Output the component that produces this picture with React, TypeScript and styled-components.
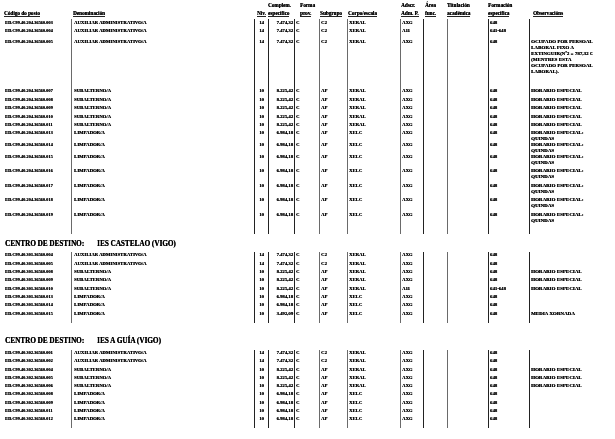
import React from 'react';
import styled, { createGlobalStyle } from 'styled-components';

const GlobalStyle = createGlobalStyle`
  html, body {
    margin: 0;
    padding: 0;
    background: #fff;
  }
  body {
    font-family: 'Liberation Serif', 'Times New Roman', serif;
    font-weight: 700;
    color: #000;
  }
`;

const COLS = '67px 183px 14px 26px 25px 28px 53px 23px 24px 41px 41px 81px';
const INK = '#222';
const SOFT = '#6a6a6a';
// columns whose left rule is drawn light grey in the scan
const LIGHT = [1, 5, 6, 7, 9];

type Row = {
  code: string;
  name: string;
  niv: string;
  comp: string;
  sub: string;
  corpo: string;
  adscr: string;
  form: string;
  obs?: string[];
  h: number;
};

const ADM = 'AUXILIAR ADMINISTRATIVO/A';
const SUB = 'SUBALTERNO/A';
const LIM = 'LIMPADOR/A';
const HE = ['HORARIO ESPECIAL'];
const HQ = ['HORARIO ESPECIAL:', 'QUINDAS'];

const adm = (code: string, adscr: string, form: string, h: number, obs?: string[]): Row => ({
  code, name: ADM, niv: '14', comp: '7.474,32', sub: 'C2', corpo: 'XERAL', adscr, form, obs, h,
});
const sub = (code: string, adscr: string, form: string, h: number, obs?: string[]): Row => ({
  code, name: SUB, niv: '10', comp: '8.225,42', sub: 'AP', corpo: 'XERAL', adscr, form, obs, h,
});
const lim = (code: string, h: number, obs?: string[], comp = '6.984,18'): Row => ({
  code, name: LIM, niv: '10', comp, sub: 'AP', corpo: 'XELC', adscr: 'AXG', form: '648', obs, h,
});

const section1: Row[] = [
  adm('ED.C99.40.204.36560.003', 'AXG', '648', 8),
  adm('ED.C99.40.204.36560.004', 'A11', '641-648', 11),
  adm('ED.C99.40.204.36560.005', 'AXG', '648', 49, [
    'OCUPADO POR PERSOAL',
    'LABORAL FIXO A',
    'EXTINGUIR(Nº2 = 787,32 €',
    '(MENTRES ESTA',
    'OCUPADO POR PERSOAL',
    'LABORAL).',
  ]),
  sub('ED.C99.40.204.36560.007', 'AXG', '648', 9, HE),
  sub('ED.C99.40.204.36560.008', 'AXG', '648', 8, HE),
  sub('ED.C99.40.204.36560.009', 'AXG', '648', 9, HE),
  sub('ED.C99.40.204.36560.010', 'AXG', '648', 8, HE),
  sub('ED.C99.40.204.36560.011', 'AXG', '648', 8, HE),
  lim('ED.C99.40.204.36560.013', 12, HQ),
  lim('ED.C99.40.204.36560.014', 12, HQ),
  lim('ED.C99.40.204.36560.015', 14, HQ),
  lim('ED.C99.40.204.36560.016', 15, HQ),
  lim('ED.C99.40.204.36560.017', 14, HQ),
  lim('ED.C99.40.204.36560.018', 15, HQ),
  lim('ED.C99.40.204.36560.019', 14, HQ),
];

const section2: Row[] = [
  adm('ED.C99.40.301.36560.004', 'AXG', '648', 8.5),
  adm('ED.C99.40.301.36560.005', 'AXG', '648', 8.4),
  sub('ED.C99.40.301.36560.008', 'AXG', '648', 8.4, HE),
  sub('ED.C99.40.301.36560.009', 'AXG', '648', 8.4, HE),
  sub('ED.C99.40.301.36560.010', 'A11', '641-648', 8.4, HE),
  lim('ED.C99.40.301.36560.013', 8.4),
  lim('ED.C99.40.301.36560.014', 8.4),
  lim('ED.C99.40.301.36560.015', 8.4, ['MEDIA XORNADA'], '3.492,09'),
];

const section3: Row[] = [
  adm('ED.C99.40.302.36560.001', 'AXG', '648', 8.25),
  adm('ED.C99.40.302.36560.002', 'AXG', '648', 8.25),
  sub('ED.C99.40.302.36560.004', 'AXG', '648', 8.25, HE),
  sub('ED.C99.40.302.36560.005', 'AXG', '648', 8.25, HE),
  sub('ED.C99.40.302.36560.006', 'AXG', '648', 8.25, HE),
  lim('ED.C99.40.302.36560.008', 8.25),
  lim('ED.C99.40.302.36560.009', 8.25),
  lim('ED.C99.40.302.36560.011', 8.25),
  lim('ED.C99.40.302.36560.012', 8.25),
];

const Page = styled.div`
  width: 615px;
  padding: 0 0 0 4px;
  box-sizing: border-box;
  will-change: transform;
  text-shadow: 0.25px 0 0 #000;
`;

const Head = styled.div`
  display: grid;
  grid-template-columns: ${COLS};
  height: 19px;
  align-items: end;
  font-size: 5.2px;
  line-height: 7.5px;
`;

const HeadCell = styled.div<{ $pad?: number }>`
  padding-left: ${(p) => p.$pad ?? 2}px;
  padding-bottom: 2px;
  white-space: nowrap;
  span {
    display: inline-block;
    line-height: 5.5px;
    box-shadow: inset 0 -1px 0 ${INK};
    padding-bottom: 1px;
  }
`;

const Table = styled.div`
  display: grid;
  grid-template-columns: ${COLS};
`;

const Lines = styled.div`
  display: contents;
`;

type Kind = 'code' | 'text' | 'obs';

const SIZES: Record<Kind, string> = { code: '4.4px', text: '4.75px', obs: '5px' };

const rule = (col?: number) =>
  col === undefined || col === 0 ? 'none' : `inset 1px 0 0 ${LIGHT.includes(col) ? SOFT : INK}`;

const Cell = styled.div<{ $col: number; $align?: string; $pad?: number; $kind?: Kind }>`
  font-size: ${(p) => SIZES[p.$kind ?? 'text']};
  line-height: ${(p) => (p.$kind === 'obs' ? '6px' : '6.8px')};
  white-space: nowrap;
  text-align: ${(p) => p.$align ?? 'left'};
  padding: 0 ${(p) => (p.$align === 'right' ? 1 : 0)}px 0 ${(p) => p.$pad ?? 1}px;
  box-shadow: ${(p) => rule(p.$col)};
  box-sizing: border-box;
`;

const Tail = styled.div<{ $col: number; $h: number }>`
  height: ${(p) => p.$h}px;
  box-shadow: ${(p) => rule(p.$col)};
`;

const Heading = styled.div<{ $top: number; $bottom: number }>`
  font-size: 7.2px;
  line-height: 8px;
  padding: ${(p) => p.$top}px 0 ${(p) => p.$bottom}px 1px;
  span {
    margin-left: 13px;
  }
`;

const Section: React.FC<{ rows: Row[]; top: number; tail: number }> = ({ rows, top, tail }) => (
  <Table>
    {Array.from({ length: 12 }).map((_, i) => (
      <Tail key={`t${i}`} $col={i} $h={top} />
    ))}
    {rows.map((r) => (
      <Lines key={r.code}>
        <Cell $col={0} $kind="code" style={{ height: r.h }}>{r.code}</Cell>
        <Cell $col={1} $pad={3}>{r.name}</Cell>
        <Cell $col={2} $align="center">{r.niv}</Cell>
        <Cell $col={3} $align="right">{r.comp}</Cell>
        <Cell $col={4} $pad={2}>C</Cell>
        <Cell $col={5} $pad={2}>{r.sub}</Cell>
        <Cell $col={6} $pad={2}>{r.corpo}</Cell>
        <Cell $col={7} $pad={2}>{r.adscr}</Cell>
        <Cell $col={8} />
        <Cell $col={9} />
        <Cell $col={10} $pad={2}>{r.form}</Cell>
        <Cell $col={11} $kind="obs" $pad={2}>
          {r.obs?.map((o) => <div key={o}>{o}</div>)}
        </Cell>
      </Lines>
    ))}
    {Array.from({ length: 12 }).map((_, i) => (
      <Tail key={`b${i}`} $col={i} $h={tail} />
    ))}
  </Table>
);

export default function App() {
  return (
    <Page>
      <GlobalStyle />
      <Head>
        <HeadCell $pad={0}><span>Código do posto</span></HeadCell>
        <HeadCell><span>Denominación</span></HeadCell>
        <HeadCell $pad={3}><span>Niv.</span></HeadCell>
        <HeadCell $pad={0}>Complem.<br /><span>específico</span></HeadCell>
        <HeadCell $pad={6}>Forma<br /><span>prov.</span></HeadCell>
        <HeadCell $pad={1}><span>Subgrupo</span></HeadCell>
        <HeadCell $pad={1}><span>Corpo/escala</span></HeadCell>
        <HeadCell $pad={1}>Adscr.<br /><span>Adm. P.</span></HeadCell>
        <HeadCell $pad={2}>Área<br /><span>func.</span></HeadCell>
        <HeadCell $pad={0}>Titulación<br /><span>académica</span></HeadCell>
        <HeadCell $pad={0}>Formación<br /><span>específica</span></HeadCell>
        <HeadCell $pad={4}><span>Observacións</span></HeadCell>
      </Head>
      <Section rows={section1} top={1} tail={8} />
      <Heading $top={6} $bottom={4}>
        CENTRO DE DESTINO:<span>IES CASTELAO (VIGO)</span>
      </Heading>
      <Section rows={section2} top={0} tail={4} />
      <Heading $top={14} $bottom={5}>
        CENTRO DE DESTINO:<span>IES A GUÍA (VIGO)</span>
      </Heading>
      <Section rows={section3} top={0} tail={4} />
    </Page>
  );
}
